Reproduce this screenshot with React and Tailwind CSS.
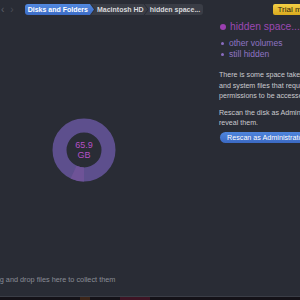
import React from 'react';

const font = { fontFamily: '"Liberation Sans", Arial, sans-serif' };

function Donut() {
  const r = 24.5;
  const c = 2 * Math.PI * r;
  const seg = (25 / 360) * c;
  return (
    <svg width="64" height="64" viewBox="0 0 64 64">
      <circle cx="32" cy="32" r={r} fill="none" stroke="#5d4f8d" strokeWidth="14" />
      {/* small lighter slice just past six o'clock */}
      <circle
        cx="32"
        cy="32"
        r={r}
        fill="none"
        stroke="#6e5397"
        strokeWidth="14"
        strokeDasharray={`${seg} ${c}`}
        transform="rotate(90 32 32)"
      />
    </svg>
  );
}

export default function App() {
  return (
    <div className="w-[300px] h-[300px] overflow-hidden bg-[#292c35] flex flex-col" style={font}>
      {/* Toolbar */}
      <div className="h-[20px] flex items-start pt-[4px] shrink-0">
        <div className="flex items-center h-[11px] text-[#5d606a] text-[10px] leading-none ml-[1px] gap-[6px]">
          <span>‹</span>
          <span className="text-[#4a4d56]">›</span>
        </div>
        <div className="flex h-[11px] ml-[11px] text-[7px] leading-[11px] whitespace-nowrap">
          <div className="pl-[3px] pr-[6px] rounded-l-[3px] bg-gradient-to-b from-[#5289e0] to-[#3c6cc6] text-white font-bold [clip-path:polygon(0_0,calc(100%-4px)_0,100%_50%,calc(100%-4px)_100%,0_100%)]">
            Disks and Folders
          </div>
          <div className="-ml-[3px] pl-[6px] pr-[4px] bg-[#3a3d46] text-[#d8d9dc] font-bold [clip-path:polygon(0_0,calc(100%-4px)_0,100%_50%,calc(100%-4px)_100%,0_100%,4px_50%)]">
            Macintosh HD
          </div>
          <div className="-ml-[3px] pl-[5px] pr-[3px] bg-[#3a3d46] text-[#d8d9dc] font-bold rounded-r-[3px] [clip-path:polygon(0_0,100%_0,100%_100%,0_100%,4px_50%)]">
            hidden space...
          </div>
        </div>
        <div className="ml-auto -mr-[20px] h-[11px] px-[5px] rounded-[2px] bg-gradient-to-b from-[#f3cf45] to-[#d9aa1c] text-[#2a2410] text-[8px] leading-[11px] whitespace-nowrap">
          Trial mode
        </div>
      </div>

      {/* Main */}
      <div className="flex flex-1 min-h-0">
        <div className="w-[219px] shrink-0 flex flex-col">
          <div className="ml-[52px] mt-[98px] relative w-[64px] h-[64px]">
            <Donut />
            <div className="absolute inset-0 flex flex-col items-center justify-center text-[#b650c8] text-[9px] leading-[10px]">
              <span>65.9</span>
              <span>GB</span>
            </div>
          </div>
          <div className="mt-auto mb-[11px] -ml-[12px] text-[7.3px] leading-[10px] text-[#8a8d96] whitespace-nowrap">
            Drag and drop files here to collect them
          </div>
        </div>

        <div className="flex flex-col whitespace-nowrap">
          <div className="flex items-center h-[14px] gap-[4px] text-[10.3px] text-[#9b48b3]">
            <span className="w-[6px] h-[6px] rounded-full bg-[#9b3fb0] ml-[1px]" />
            <span>hidden space...</span>
          </div>
          <div className="mt-[4px] flex flex-col text-[8.5px] leading-[11px] text-[#8f74c4]">
            <div className="flex items-center gap-[5px]">
              <span className="w-[3px] h-[3px] rounded-full bg-[#8a6cc0] ml-[2px]" />
              <span>other volumes</span>
            </div>
            <div className="flex items-center gap-[5px]">
              <span className="w-[3px] h-[3px] rounded-full bg-[#8a6cc0] ml-[2px]" />
              <span>still hidden</span>
            </div>
          </div>
          <div className="mt-[10px] text-[7.1px] leading-[10.5px] text-[#c9cacf]">
            <div>There is some space taken by snapshots</div>
            <div>and system files that require special</div>
            <div>permissions to be accessed.</div>
          </div>
          <div className="mt-[6px] text-[7.1px] leading-[10.5px] text-[#c9cacf]">
            <div>Rescan the disk as Administrator to</div>
            <div>reveal them.</div>
          </div>
          <div className="mt-[3px] ml-[1px] h-[11px] pl-[7px] pr-[8px] rounded-[6px] bg-gradient-to-b from-[#4f86de] to-[#3b69c2] text-white text-[7.2px] leading-[11px] w-max">
            Rescan as Administrator
          </div>
        </div>
      </div>

      {/* window edge and desktop below */}
      <div className="h-[1px] bg-[#3b3e47] shrink-0" />
      <div className="h-[3px] bg-[#141218] shrink-0 flex">
        <div className="w-[10px] ml-[80px] bg-[#3a2418]" />
        <div className="w-[30px] ml-[30px] bg-[#3d1424]" />
      </div>
    </div>
  );
}
